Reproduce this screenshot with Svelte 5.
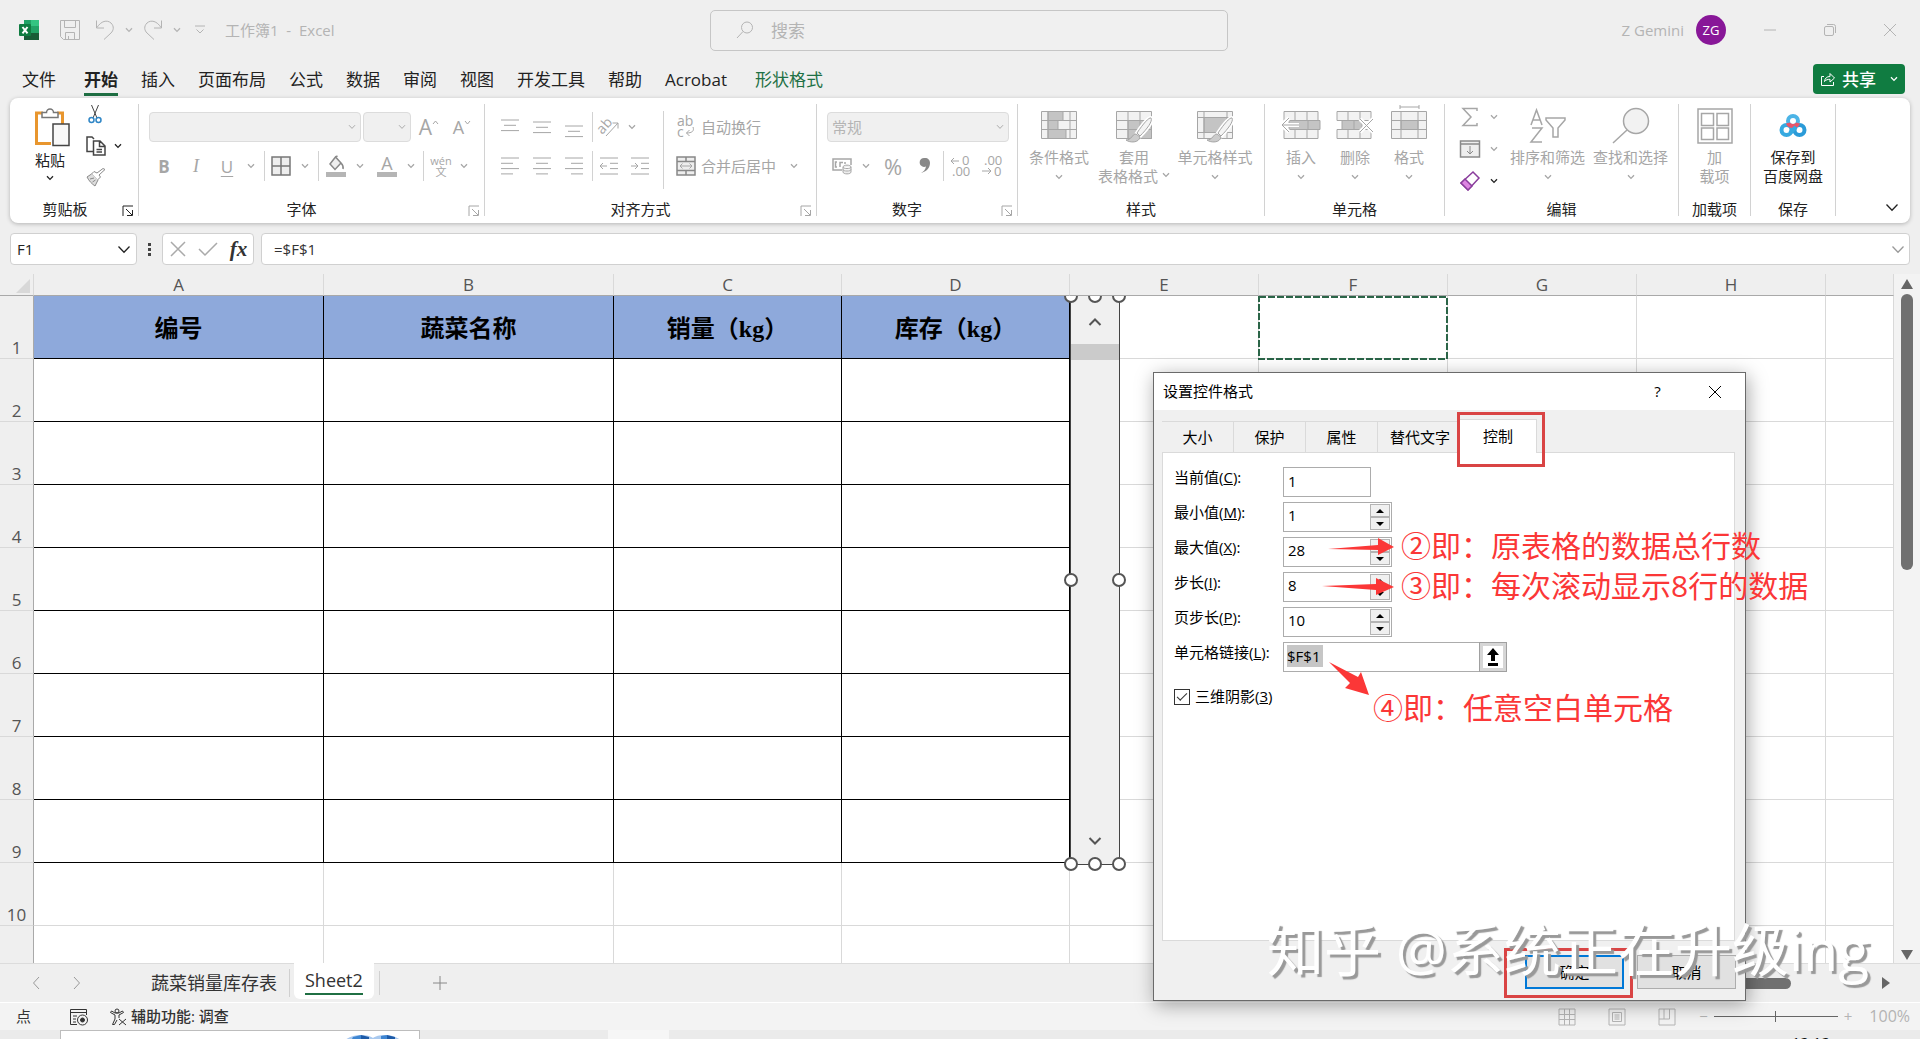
<script lang="ts">
	const tabs = ['文件', '开始', '插入', '页面布局', '公式', '数据', '审阅', '视图', '开发工具', '帮助', 'Acrobat', '形状格式'];
	const columns = ['A', 'B', 'C', 'D', 'E', 'F', 'G', 'H', ''];
	const headings = ['编号', '蔬菜名称', '销量（kg）', '库存（kg）'];
	const rows = [1, 2, 3, 4, 5, 6, 7, 8, 9, 10, 11];
	const handles = ['tl', 'tc', 'tr', 'ml', 'mr', 'bl', 'bc', 'br'];

	const dialogTabs = ['大小', '保护', '属性', '替代文字', '控制'];
	let activeDialogTab = $state('控制');

	const spinFields = [
		{ id: 'min', label: '最小值', key: 'M', value: '1' },
		{ id: 'max', label: '最大值', key: 'X', value: '28' },
		{ id: 'step', label: '步长', key: 'I', value: '8' },
		{ id: 'page', label: '页步长', key: 'P', value: '10' }
	];

	let sheet = $state('Sheet2');
	let shadow = $state(true);
</script>

{#snippet chevron()}
	<svg class="chev" width="8" height="6" viewBox="0 0 8 6"><path d="M1 1.2 4 4.4 7 1.2" /></svg>
{/snippet}

{#snippet bigChevron()}
	<svg class="chev" width="14" height="9" viewBox="0 0 14 9"><path d="M1.5 1.5 7 7.2l5.500-5.700" /></svg>
{/snippet}

{#snippet lines(ws: number[], align: string)}
	<svg width="20" height="20" viewBox="0 0 20 20">
		{#each ws as w, i}
			<path d="M{align === 'l' ? 1 : align === 'r' ? 19 - w : 10 - w / 2} {2 + i * 5.3}h{w}" />
		{/each}
	</svg>
{/snippet}

{#snippet launcher(dark: boolean)}
	<button class="launcher" class:dark aria-label="更多选项">
		<svg width="12" height="12" viewBox="0 0 12 12"><path d="M1 11V1h10M4 4l6 6M10.500 5v5.500H5" /></svg>
	</button>
{/snippet}

{#snippet brush()}
	<path d="M36 10c-2-1-8 6-14 15l3 3c7-7 13-15 11-18z" fill="#f4f4f4" stroke="#fff" stroke-width="4" />
	<path d="M36 10c-2-1-8 6-14 15l3 3c7-7 13-15 11-18z" fill="#f4f4f4" />
	<path d="M21 26c-4 0-4 6-10 6 4 3 13 3 14-3z" fill="#ccc" />
{/snippet}

<div class="app">
	<header class="titlebar">
		<div class="quick">
			<svg class="logo" width="22" height="22" viewBox="0 0 22 22">
				<path d="M6 1h7v6H6z" fill="#21a366" /><path d="M13 1h8v6h-8z" fill="#33c481" />
				<path d="M6 7h7v7H6z" fill="#107c41" /><path d="M13 7h8v7h-8z" fill="#21a366" />
				<path d="M6 14h15v7H6z" fill="#185c37" />
				<rect x="1" y="5" width="12" height="12" rx="1" fill="#107c41" />
				<path d="M4.500 8 9.500 14.300M9.500 8 4.500 14.300" stroke="#fff" stroke-width="1.800" />
			</svg>
			<button class="q-save" aria-label="保存">
				<svg width="22" height="22" viewBox="0 0 22 22"><path d="M1.500 1.500h19v19h-16l-3-3zM5.500 1.500v7h11v-7M6.500 20.500v-7h9v7M9.500 17v3" /></svg>
			</button>
			<button aria-label="撤消">
				<svg width="20" height="22" viewBox="0 0 20 22"><path d="M1.500 1.500V9H9M2 8.500C6 2 12 .5 16 4c3.500 3.500 2.500 7.500 0 10L9 20.500" /></svg>
			</button>
			<button class="q-chev" aria-label="撤消列表">{@render chevron()}</button>
			<button aria-label="恢复">
				<svg width="20" height="22" viewBox="0 0 20 22"><path d="M18.500 1.500V9H11M18 8.500C14 2 8 .5 4 4c-3.500 3.500-2.500 7.500 0 10l7 6.500" /></svg>
			</button>
			<button class="q-chev" aria-label="恢复列表">{@render chevron()}</button>
			<button class="q-more" aria-label="自定义快速访问工具栏">
				<svg width="10" height="10" viewBox="0 0 10 10"><path d="M0 1h10M1.500 4.500 5 8l3.500-3.500" /></svg>
			</button>
			<span class="doc">工作簿1&nbsp; -&nbsp; Excel</span>
		</div>
		<label class="search">
			<svg width="20" height="20" viewBox="0 0 20 20"><circle cx="12" cy="7.500" r="5.500" /><path d="M8 11.500 2 18" /></svg>
			<input type="text" placeholder="搜索" aria-label="搜索" />
		</label>
		<div class="account">
			<span>Z Gemini</span>
			<span class="avatar">ZG</span>
			<button aria-label="最小化"><svg width="14" height="14" viewBox="0 0 14 14"><path d="M1 7h12" /></svg></button>
			<button aria-label="向下还原"><svg width="14" height="14" viewBox="0 0 14 14"><rect x="1.500" y="3.500" width="9" height="9" rx="1.500" /><path d="M4 1.500h6.500q2 0 2 2V10" /></svg></button>
			<button aria-label="关闭"><svg width="14" height="14" viewBox="0 0 14 14"><path d="M1 1l12 12M13 1 1 13" /></svg></button>
		</div>
	</header>

	<nav class="tabs">
		{#each tabs as tab}
			<button class:active={tab === '开始'} class:context={tab === '形状格式'}>{tab}</button>
		{/each}
		<button class="share">
			<svg width="16" height="16" viewBox="0 0 16 16"><path d="M4 5.500H1.500v9h12V11M4.500 10.500C5 7 7 5.500 10 5.500V2.500l4.500 4.500L10 11V8.300c-2.500 0-4 .5-5.500 2.200z" /></svg>
			<span>共享</span>
			{@render chevron()}
		</button>
	</nav>

	<section class="ribbon">
		<div class="group clipboard">
			<div class="body">
				<button class="paste dark">
					<svg width="36" height="40" viewBox="0 0 36 40">
						<path d="M9 6H2.500v30.500H17M23 6h5.500v11" stroke="#e8962e" stroke-width="3" />
						<path d="M8 10.500V5.500h4.500a3.500 3.500 0 0 1 7 0H24v5z" fill="#fff" stroke="#777" stroke-width="1.500" />
						<rect x="19" y="17" width="16" height="21.500" fill="#f8f8f8" stroke="#444" stroke-width="1.500" />
					</svg>
					<span>粘贴</span>
					{@render chevron()}
				</button>
				<div class="clip-side">
					<button class="cut" aria-label="剪切">
						<svg width="14" height="20" viewBox="0 0 14 20"><path d="M3.500 1 9 14M10.500 1 5 14" stroke="#444" /><circle cx="3.500" cy="16" r="2.500" stroke="#2f86c6" stroke-width="1.500" /><circle cx="10.500" cy="16" r="2.500" stroke="#2f86c6" stroke-width="1.500" /></svg>
					</button>
					<button class="dark copy" aria-label="复制">
						<svg width="20" height="20" viewBox="0 0 20 20"><path d="M7 15.500H1V1h5l2 2" stroke="#444" stroke-width="1.500" /><path d="M7.500 5h6.500l5 5v9H7.500zM13.500 5v5.500H19M10.500 13.500h5.500M10.500 16h5.500" stroke="#444" stroke-width="1.500" /></svg>
						{@render chevron()}
					</button>
					<button aria-label="格式刷">
						<svg width="20" height="19" viewBox="0 0 20 19"><path d="M19 1.500 13 7l1.500 2-3 3-6-6 2.500-2.500L11 5l6-4.500z" stroke="#8a8a8a" /><path d="M5.500 6 1 9c2 4 5 7 8 9l3-6M4 11l4-1M6.500 14l3-2" fill="#ddd" stroke="#8a8a8a" /></svg>
					</button>
				</div>
			</div>
			<footer>剪贴板{@render launcher(true)}</footer>
		</div>

		<div class="group font">
			<div class="body stack">
				<div class="row">
					<select class="combo wide" aria-label="字体" disabled></select>
					<select class="combo narrow" aria-label="字号" disabled></select>
					<button class="grow" aria-label="增大字号">A<svg width="7" height="14" viewBox="0 0 7 14"><path d="M1 4l2.500-3L6 4" /></svg></button>
					<button class="shrink" aria-label="减小字号">A<svg width="7" height="14" viewBox="0 0 7 14"><path d="M1 1l2.500 3L6 1" /></svg></button>
				</div>
				<div class="row font-tools">
					<button class="b">B</button>
					<button class="i">I</button>
					<button class="u">U</button>
					{@render chevron()}
					<span class="bar"></span>
					<button aria-label="边框"><svg width="20" height="20" viewBox="0 0 20 20"><path d="M1 1h18v18H1zM10 1v18M1 10h18" stroke="#777" stroke-width="1.500" fill="#eee" /></svg></button>
					{@render chevron()}
					<span class="bar"></span>
					<button aria-label="填充颜色"><svg width="20" height="22" viewBox="0 0 20 22"><path d="M9.500 2 4 9l5 5.500L15 8zM9.500 2l2-1M15 8c2 2 2.500 4 2 6" fill="#eee" stroke="#888" stroke-width="1.500" /><path d="M0 17h20v5H0z" fill="#b5b5b5" stroke="none" /></svg></button>
					{@render chevron()}
					<button class="font-color" aria-label="字体颜色">A</button>
					{@render chevron()}
					<span class="bar"></span>
					<button class="wen"><span>wén</span><span>文</span></button>
					{@render chevron()}
				</div>
			</div>
			<footer>字体{@render launcher(false)}</footer>
		</div>

		<div class="group align">
			<div class="body">
				<div class="align-grid">
					<button class="up" aria-label="顶端对齐">{@render lines([18, 12, 18], 'c')}</button>
					<button class="mid" aria-label="垂直居中">{@render lines([18, 12, 18], 'c')}</button>
					<button class="low" aria-label="底端对齐">{@render lines([18, 12, 18], 'c')}</button>
					<span class="bar"></span>
					<button aria-label="方向"><svg width="22" height="22" viewBox="0 0 22 22"><text x="-1" y="15" transform="rotate(-48 6 11)" font-size="14">ab</text><path d="M8 20 20 7M14.500 7H20v5.500" /></svg></button>
					{@render chevron()}
					<button aria-label="左对齐">{@render lines([18, 12, 18, 12], 'l')}</button>
					<button aria-label="居中">{@render lines([18, 12, 18, 12], 'c')}</button>
					<button aria-label="右对齐">{@render lines([18, 12, 18, 12], 'r')}</button>
					<span class="bar"></span>
					<button aria-label="减少缩进"><svg width="20" height="20" viewBox="0 0 20 20"><path d="M1 2h18M11 7.300h8M11 12.600h8M1 18h18M1 10h7M4 7l-3 3 3 3" /></svg></button>
					<button aria-label="增加缩进"><svg width="20" height="20" viewBox="0 0 20 20"><path d="M1 2h18M11 7.300h8M11 12.600h8M1 18h18M1 10h7M5 7l3 3-3 3" /></svg></button>
				</div>
				<span class="bar tall"></span>
				<div class="wraps">
					<button>
						<svg width="20" height="22" viewBox="0 0 20 22"><text x="1" y="10" font-size="14">ab</text><text x="1" y="21" font-size="14">c</text><path d="M17 11c1.500 4-1 6-6.500 6M13.500 14l-3 3 3 3" /></svg>
						<span>自动换行</span>
					</button>
					<button>
						<svg width="20" height="20" viewBox="0 0 20 20"><path d="M1 1h18v18H1zM1 5.500h18M1 14.500h18M10 1v4.500M10 14.500V19" fill="#eee" stroke="#888" stroke-width="1.500" /><path d="M4 10h12M6.500 7.500 4 10l2.500 2.500M13.500 7.500 16 10l-2.500 2.500" /></svg>
						<span>合并后居中</span>
						{@render chevron()}
					</button>
				</div>
			</div>
			<footer>对齐方式{@render launcher(false)}</footer>
		</div>

		<div class="group number">
			<div class="body stack">
				<div class="row">
					<select class="combo fmt" aria-label="数字格式" disabled><option>常规</option></select>
				</div>
				<div class="row number-tools">
					<button aria-label="会计数字格式"><svg width="20" height="18" viewBox="0 0 20 18"><path d="M10 13H1V2h18v6M5 5H3.500v5H5M8 10V5.500h3M13 5v2" stroke-width="1.500" /><path d="M11 10c0-2.500 8-2.500 8 0v5c0 2.500-8 2.500-8 0zM11 10c0 2 8 2 8 0M11 12.500c0 2 8 2 8 0" fill="#eee" /></svg></button>
					{@render chevron()}
					<button class="pct">%</button>
					<button aria-label="千位分隔"><svg width="12" height="18" viewBox="0 0 12 18"><path d="M6 1a4.500 4.500 0 1 0 1 8.500C6.500 13 4 15 2 16c4-1 9-4 9-10C11 3 9 1 6 1z" fill="#888" stroke="none" /></svg></button>
					<span class="bar"></span>
					<button aria-label="增加小数位数"><svg width="20" height="22" viewBox="0 0 20 22"><text x="12" y="10" font-size="13">0</text><text x="2" y="21" font-size="13">.00</text><path d="M1 6h8M4 3 1 6l3 3" /></svg></button>
					<button aria-label="减少小数位数"><svg width="20" height="22" viewBox="0 0 20 22"><text x="2" y="10" font-size="13">.00</text><text x="12" y="21" font-size="13">0</text><path d="M0 16h9M6 13l3 3-3 3" /></svg></button>
				</div>
			</div>
			<footer>数字{@render launcher(false)}</footer>
		</div>

		<div class="group styles">
			<div class="body">
				<button class="big">
					<svg width="38" height="36" viewBox="0 0 38 36"><path d="M1.500 3.500h35v27h-35z" fill="#f2f2f2" /><path d="M8 3.500h15v9H8zM8 12.500h10v9H8zM8 21.500h18v9H8z" fill="#c4c4c4" /><path d="M1.500 12.500h35M1.500 21.500h35M8 3.500v27M30 3.500v27" /></svg>
					<span>条件格式</span>
					{@render chevron()}
				</button>
				<button class="big">
					<svg width="38" height="36" viewBox="0 0 38 36"><path d="M1.500 3.500h35v27h-35z" fill="#f2f2f2" /><path d="M13 12.500h23.500v18H13z" fill="#c4c4c4" /><path d="M1.500 12.500h35M1.500 21.500h35M13 3.500v27M25 3.500v27" />{@render brush()}</svg>
					<span>套用</span>
					<span class="inline">表格格式 {@render chevron()}</span>
				</button>
				<button class="big">
					<svg width="38" height="36" viewBox="0 0 38 36"><path d="M1.500 3.500h35v27h-35z" fill="#f2f2f2" /><path d="M8 9.500h23v15H8z" fill="#c4c4c4" /><path d="M1.500 9.500h35M1.500 24.500h35M8 3.500v27M31 3.500v27" />{@render brush()}</svg>
					<span>单元格样式</span>
					{@render chevron()}
				</button>
			</div>
			<footer>样式</footer>
		</div>

		<div class="group cells">
			<div class="body">
				<button class="big">
					<svg width="40" height="36" viewBox="0 0 40 36"><path d="M3 3.500h34v9H3zM3 21.500h34v9H3zM14 3.500v9M26 3.500v9M14 21.500v9M26 21.500v9" fill="#f2f2f2" /><path d="M8 12.500h31v9H8zM27 12.500v9" fill="#c4c4c4" /><path d="M1 17h17M8 10l-7 7 7 7" stroke="#fff" stroke-width="4" /><path d="M1 17h17M8 10l-7 7 7 7" /></svg>
					<span>插入</span>
					{@render chevron()}
				</button>
				<button class="big">
					<svg width="40" height="36" viewBox="0 0 40 36"><path d="M2 3.500h34v9H2zM2 21.500h34v9H2zM13 3.500v9M25 3.500v9M13 21.500v9M25 21.500v9" fill="#f2f2f2" /><path d="M7 12.500h20v9H7zM19 12.500v9" fill="#c4c4c4" /><path d="M25 11l13 13M38 11 25 24" stroke="#fff" stroke-width="4" /><path d="M25 11l13 13M38 11 25 24" /></svg>
					<span>删除</span>
					{@render chevron()}
				</button>
				<button class="big">
					<svg width="38" height="36" viewBox="0 0 38 36"><path d="M1.500 3.500h35v27h-35z" fill="#f2f2f2" /><path d="M11 12.500h17v9H11z" fill="#c4c4c4" /><path d="M1.500 12.500h35M1.500 21.500h35M11 3.500v27M28 3.500v27M10-1h19M10-3v4M29-3v4" /></svg>
					<span>格式</span>
					{@render chevron()}
				</button>
			</div>
			<footer>单元格</footer>
		</div>

		<div class="group editing">
			<div class="body">
				<div class="edit-side">
					<button aria-label="自动求和"><svg width="20" height="20" viewBox="0 0 20 20"><path d="M17 4V1.500H3l8 8.500-8 8.500h14V16" stroke-width="1.500" /></svg></button>
					{@render chevron()}
					<button aria-label="填充"><svg width="20" height="20" viewBox="0 0 20 20"><path d="M.5 2h19v16H.5zM.5 5h19" fill="#eee" stroke="#8a8a8a" stroke-width="1.500" /><path d="M10 7v8M7 12l3 3 3-3" stroke="#8a8a8a" /></svg></button>
					{@render chevron()}
					<button aria-label="清除"><svg width="20" height="20" viewBox="0 0 20 20"><path d="M1 12 13 1l6 6L8 19z" fill="#fff" stroke="#8a3d9c" stroke-width="1.500" /><path d="M1 12l4-4 7 7-4 4z" fill="#dd85e2" stroke="#8a3d9c" stroke-width="1.500" /></svg></button>
					<span class="dark">{@render chevron()}</span>
				</div>
				<button class="big">
					<svg width="38" height="36" viewBox="0 0 38 36"><path d="M2 17 7.500 2 13 17M4 12h7M3 20h10L2 34h11M17 10h19v2l-7 8v9h-5v-9l-7-8z" fill="none" stroke-width="1.500" /></svg>
					<span>排序和筛选</span>
					{@render chevron()}
				</button>
				<button class="big">
					<svg width="38" height="36" viewBox="0 0 38 36"><circle cx="24" cy="13" r="12.500" fill="#f2f2f2" stroke-width="1.500" /><path d="M15 22 1 35" stroke-width="1.500" /></svg>
					<span>查找和选择</span>
					{@render chevron()}
				</button>
			</div>
			<footer>编辑</footer>
		</div>

		<div class="group addins">
			<div class="body">
				<button class="big">
					<svg width="36" height="36" viewBox="0 0 36 36"><path d="M1 1h34v34H1zM4.500 5.500h12v12h-12zM20 5.500h11.500v12H20zM4.500 20h12v11.500h-12zM20 20h11.500v11.500H20z" fill="none" stroke-width="1.500" /></svg>
					<span>加</span>
					<span>载项</span>
				</button>
			</div>
			<footer>加载项</footer>
		</div>

		<div class="group save">
			<div class="body">
				<button class="big dark">
					<svg width="36" height="36" viewBox="0 0 36 36"><g fill="none" stroke-width="4"><circle cx="11.500" cy="22" r="5" stroke="#36a9e0" /><circle cx="24.500" cy="22" r="5" stroke="#2b9bd8" /><circle cx="18" cy="13" r="5" stroke="#4cb4e6" /><path d="M13 15c1 4 9 4 10 0" stroke="#e8556a" /><path d="M15 25l6-6" stroke="#36a9e0" /></g></svg>
					<span>保存到</span>
					<span>百度网盘</span>
				</button>
			</div>
			<footer>保存</footer>
		</div>
		<button class="collapse" aria-label="折叠功能区">{@render bigChevron()}</button>
	</section>

	<section class="formula">
		<label class="namebox">
			<input type="text" value="F1" aria-label="名称框" />
			{@render bigChevron()}
		</label>
		<span class="dots"></span>
		<div class="fx">
			<button aria-label="取消"><svg width="18" height="16" viewBox="0 0 18 16"><path d="M2 1l14 14M16 1 2 15" stroke="#aaa" stroke-width="1.500" /></svg></button>
			<button aria-label="输入"><svg width="20" height="16" viewBox="0 0 20 16"><path d="M1 8l6 6L19 2" stroke="#aaa" stroke-width="1.500" /></svg></button>
			<button class="fn">fx</button>
		</div>
		<label class="expr">
			<input type="text" value="=$F$1" aria-label="编辑栏" />
			{@render bigChevron()}
		</label>
	</section>

	<main class="sheet">
		<div class="grid-wrap">
			<table>
				<colgroup>
					<col class="c-num" /><col class="c-ab" /><col class="c-ab" /><col class="c-cd" /><col class="c-cd" />
					<col class="c-ef" /><col class="c-ef" /><col class="c-ef" /><col class="c-ef" /><col />
				</colgroup>
				<thead>
					<tr>
						<th class="corner"><svg width="14" height="14" viewBox="0 0 14 14"><path d="M14 0v14H0z" /></svg></th>
						{#each columns as column}
							<th>{column}</th>
						{/each}
					</tr>
				</thead>
				<tbody>
					{#each rows as row}
						<tr>
							<th>{row}</th>
							{#each columns as _, i}
								<td class:boxed={i < 4 && row < 10} class:heading={i < 4 && row === 1}>{row === 1 && i < 4 ? headings[i] : ''}</td>
							{/each}
						</tr>
					{/each}
				</tbody>
			</table>
			<div class="canvas">
				<div class="control">
					<svg width="14" height="10" viewBox="0 0 14 10"><path d="M1.500 8 7 2.500 12.500 8" /></svg>
					<span class="thumb"></span>
					<svg class="down" width="14" height="10" viewBox="0 0 14 10"><path d="M1.500 2 7 7.500 12.500 2" /></svg>
					{#each handles as handle}
						<i class="handle {handle}"></i>
					{/each}
				</div>
				<svg class="ants" width="190" height="64" viewBox="0 0 190 64"><path d="M1 1h188v62H1z" /></svg>
			</div>
		</div>
		<div class="vbar">
			<svg width="12" height="10" viewBox="0 0 12 10"><path d="M6 0l6 10H0z" /></svg>
			<span></span>
			<svg class="end" width="12" height="10" viewBox="0 0 12 10"><path d="M0 0h12L6 10z" /></svg>
		</div>
	</main>

	<div class="sheetbar">
		<button class="nav" aria-label="上一个工作表"><svg width="8" height="14" viewBox="0 0 8 14"><path d="M7 1 1.500 7 7 13" /></svg></button>
		<button class="nav" aria-label="下一个工作表"><svg width="8" height="14" viewBox="0 0 8 14"><path d="M1 1l5.500 6L1 13" /></svg></button>
		{#each ['蔬菜销量库存表', 'Sheet2'] as name}
			<button class="sheet-tab" class:active={sheet === name} onclick={() => (sheet = name)}><span>{name}</span></button>
		{/each}
		<button class="add" aria-label="新工作表"><svg width="16" height="16" viewBox="0 0 16 16"><path d="M8 1v14M1 8h14" /></svg></button>
		<div class="hbar">
			<span></span>
			<svg width="8" height="12" viewBox="0 0 8 12"><path d="M0 0l8 6-8 6z" /></svg>
		</div>
	</div>

	<footer class="status">
		<span class="mode">点</span>
		<svg class="macro" width="20" height="18" viewBox="0 0 20 18"><path d="M8 16.500H1.500v-15h16V7M1.500 4.500h16M4 8h4M4 11h3M4 14h3" /><circle cx="13.500" cy="12" r="5" /><circle cx="13.500" cy="12" r="2" fill="#333" /></svg>
		<button class="access">
			<svg width="18" height="18" viewBox="0 0 18 18"><circle cx="8" cy="3" r="2" /><path d="M1.500 4.500 6 7v4l-2.500 5.500h2L8 12M14.500 4.500 10 7v3M1.500 4.500l1-1.500L6 5h4l3.500-2 1 1.500M10 11l7 6M17 11l-7 6" /></svg>
			<span>辅助功能: 调查</span>
		</button>
		<div class="views">
			<button aria-label="普通"><svg width="18" height="18" viewBox="0 0 18 18"><path d="M1 1h16v16H1zM6.500 1v16M11.500 1v16M1 6.500h16M1 11.500h16" /></svg></button>
			<button aria-label="页面布局"><svg width="18" height="18" viewBox="0 0 18 18"><path d="M1 1h16v16H1zM4.500 4.500h9v9h-9zM6.500 7h5M6.500 9h5M6.500 11h5" /></svg></button>
			<button aria-label="分页预览"><svg width="18" height="18" viewBox="0 0 18 18"><path d="M1 1h16v16H1zM6 1v10M11.500 1v10M1 11h10.500" /></svg></button>
		</div>
		<div class="zoom">
			<span>−</span>
			<span class="track"></span>
			<span>+</span>
			<span class="value">100%</span>
		</div>
	</footer>

	<div class="taskbar">
		<div class="preview">
			<svg width="56" height="6" viewBox="0 0 56 6"><path d="M0 5C4 2 10 0 16 0s9 1 12 3c3-2 6-3 12-3s11 2 16 5v1H0z" fill="#a9c9ef" /><path d="M8 2l8-2v6H6zM36 1l6-1v6h-6z" fill="#3f86d2" /><path d="M16 0l8 2v4h-8zM42 0l8 2v4h-8z" fill="#1d5ba8" /></svg>
		</div>
		<div class="pin"></div>
		<span class="clock">12:12</span>
	</div>

	<div class="dialog" role="dialog" aria-label="设置控件格式">
		<header>
			<span>设置控件格式</span>
			<button>?</button>
			<button aria-label="关闭对话框"><svg width="14" height="14" viewBox="0 0 14 14"><path d="M1 1l12 12M13 1 1 13" /></svg></button>
		</header>
		<div class="dialog-tabs">
			{#each dialogTabs as tab}
				<button class:active={tab === activeDialogTab} class:long={tab.length > 2} onclick={() => (activeDialogTab = tab)}>{tab}</button>
			{/each}
		</div>
		<div class="panel">
			<div class="field">
				<label for="cur">当前值(<u>C</u>):</label>
				<input id="cur" class="short" type="text" value="1" />
			</div>
			{#each spinFields as field}
				<div class="field">
					<label for={field.id}>{field.label}(<u>{field.key}</u>):</label>
					<div class="spin">
						<input id={field.id} type="text" value={field.value} />
						<div class="arrows">
							<button aria-label="增加"><svg width="8" height="4" viewBox="0 0 8 4"><path d="M4 0l4 4H0z" /></svg></button>
							<button aria-label="减少"><svg width="8" height="4" viewBox="0 0 8 4"><path d="M0 0h8L4 4z" /></svg></button>
						</div>
					</div>
				</div>
			{/each}
			<div class="field">
				<label for="link">单元格链接(<u>L</u>):</label>
				<div class="ref">
					<div class="ref-box">
						<input id="link" type="text" value="$F$1" />
					</div>
					<button aria-label="选择单元格"><svg width="12" height="18" viewBox="0 0 12 18"><path d="M6 0l6 7H8v6H4V7H0zM1 15h10v3H1z" /></svg></button>
				</div>
			</div>
			<label class="check"><input type="checkbox" bind:checked={shadow} /><span>三维阴影(<u>3</u>)</span></label>
		</div>
		<div class="actions">
			<button class="ok">确定</button>
			<button>取消</button>
		</div>
	</div>

	<!-- red markup on top of the dialog -->
	<div class="notes">
		<i class="box tab-box"></i>
		<i class="box ok-box"></i>
		<svg class="arrow a1" width="66" height="18" viewBox="0 0 66 18"><path d="M0 11 50 7V0l16 9-16 8v-5z" /></svg>
		<svg class="arrow a2" width="72" height="18" viewBox="0 0 72 18"><path d="M0 8l54-2V0l18 9-18 8v-5z" /></svg>
		<svg class="arrow a3" width="42" height="34" viewBox="0 0 42 34"><path d="M0 0l29 15 3-5 8 23-24-7 5-5z" /></svg>
		<p class="n2">②即：原表格的数据总行数</p>
		<p class="n3">③即：每次滚动显示8行的数据</p>
		<p class="n4">④即：任意空白单元格</p>
		<p class="mark">知乎 @系统正在升级ing</p>
	</div>
</div>

<style>
	:global(body) {
		margin: 0;
		overflow: hidden;
	}

	.app {
		position: relative;
		display: flex;
		flex-direction: column;
		height: 100vh;
		overflow: hidden;
		background: #efefef;
		color: #222;
		font: 15px/19px "Open Sans", "Noto Sans CJK SC", sans-serif;
	}

	button,
	input,
	select {
		font: inherit;
		color: inherit;
		margin: 0;
		padding: 0;
		border: 0;
		background: none;
		box-sizing: border-box;
		outline: 0;
	}

	button {
		display: flex;
		align-items: center;
		justify-content: center;
		white-space: nowrap;
	}

	svg {
		display: block;
		flex: none;
		overflow: visible;
		fill: none;
		stroke: currentColor;
	}

	svg text {
		fill: currentColor;
		stroke: none;
	}

	.logo path,
	.logo rect {
		stroke-width: 0;
	}

	.logo path:last-child {
		stroke-width: 2;
	}

	.chev {
		justify-self: center;
		align-self: center;
		stroke-width: 1.3;
	}

	/* title bar */
	.titlebar {
		display: grid;
		grid-template-columns: 1fr 518px 1fr;
		align-items: center;
		height: 60px;
		padding: 0 0 0 18px;
		gap: 10px;
		color: #b4b4b4;
		flex: none;
	}

	.quick,
	.account {
		display: flex;
		align-items: center;
	}

	.q-save {
		margin: 0 14px 0 19px;
	}

	.q-chev {
		width: 28px;
	}

	.q-more {
		margin: 0 20px 0 4px;
	}

	.doc {
		white-space: nowrap;
	}

	.search {
		display: flex;
		align-items: center;
		gap: 16px;
		height: 41px;
		padding: 0 24px;
		border: 1px solid #c6c6c6;
		border-radius: 5px;
		box-sizing: border-box;
		font-size: 17px;
		background: #f0f0f0;
	}

	.search input {
		flex: 1;
	}

	.search input::placeholder {
		color: #b4b4b4;
		opacity: 1;
	}

	.account {
		justify-content: flex-end;
		padding-right: 16px;
	}

	.avatar {
		display: grid;
		place-items: center;
		width: 30px;
		height: 30px;
		margin: 0 14px 0 12px;
		border-radius: 50%;
		background: #881798;
		color: #fff;
		font-size: 13px;
	}

	.account button {
		width: 60px;
	}

	.account button:last-child {
		width: 28px;
		margin-left: 16px;
	}

	/* ribbon tabs */
	.tabs {
		display: flex;
		gap: 23px;
		height: 38px;
		padding: 0 15px 0 22px;
		font-size: 17px;
		flex: none;
	}

	.tabs button {
		height: 36px;
		padding-top: 5px;
		border-bottom: 3px solid transparent;
	}

	.tabs button:first-child {
		margin-right: 5px;
	}

	.tabs .active {
		font-weight: 700;
		border-color: #1f6f43;
	}

	.tabs .context {
		margin-left: 5px;
		color: #1e7145;
	}

	.tabs .share {
		margin: 4px 0 4px auto;
		height: 30px;
		width: 92px;
		padding: 0;
		border: 0;
		border-radius: 4px;
		gap: 6px;
		background: #107c41;
		color: #fff;
		font-weight: 500;
	}

	.share .chev {
		margin-left: 8px;
	}

	/* ribbon */
	.ribbon {
		display: flex;
		margin: 0 10px;
		padding: 6px 0 7px;
		border-radius: 8px;
		background: #fff;
		box-shadow: 0 1px 4px rgba(0, 0, 0, 0.25);
		flex: none;
	}

	.group {
		display: flex;
		flex-direction: column;
		height: 112px;
		border-right: 1px solid #d2d2d2;
		box-sizing: border-box;
		color: #a6a6a6;
		flex: none;
	}

	.clipboard { width: 129px; }
	.font { width: 346px; }
	.align { width: 332px; }
	.number { width: 201px; }
	.styles { width: 247px; }
	.cells { width: 180px; }
	.editing { width: 234px; }
	.addins { width: 72px; }
	.save { width: 85px; }

	.body {
		display: flex;
		flex: 1;
	}

	.stack {
		flex-direction: column;
		padding-top: 8px;
		gap: 9px;
	}

	.group footer {
		position: relative;
		height: 16px;
		line-height: 18px;
		text-align: center;
		color: #222;
	}

	.clipboard footer {
		padding-right: 18px;
	}

	.font footer,
	.align footer,
	.number footer {
		padding-right: 20px;
	}

	.launcher {
		position: absolute;
		right: 4px;
		top: 5px;
		color: #a6a6a6;
	}

	.dark {
		color: #222;
	}

	.launcher.dark {
		color: #222;
	}

	.paste {
		flex-direction: column;
		justify-content: flex-start;
		padding-top: 3px;
		width: 68px;
		margin-left: 8px;
	}

	.paste span {
		margin: 4px 4px 5px 0;
	}

	.paste .chev {
		margin-right: 4px;
	}

	.clip-side {
		display: flex;
		flex-direction: column;
		align-items: flex-start;
		gap: 12px;
		padding: 3px 0 0 -2px;
	}

	.cut {
		width: 18px;
	}

	.copy {
		gap: 8px;
	}

	.row {
		display: flex;
		align-items: center;
		height: 30px;
		padding-left: 10px;
	}

	.combo {
		height: 30px;
		border: 1px solid #dcdcdc;
		border-radius: 4px;
		opacity: 1;
		color: #b4b4b4;
		appearance: none;
		background: #f0f0f0 url("data:image/svg+xml,%3Csvg xmlns='http://www.w3.org/2000/svg' width='8' height='6'%3E%3Cpath d='M1 1.200 4 4.400 7 1.200' fill='none' stroke='%23aaa'/%3E%3C/svg%3E") no-repeat right 4px center;
	}

	.wide { width: 212px; margin-right: 2px; }
	.narrow { width: 48px; }
	.fmt { width: 182px; padding-left: 4px; }

	.grow {
		width: 36px;
		font-size: 21px;
	}

	.shrink {
		width: 30px;
		font-size: 18px;
	}

	.font-tools {
		display: grid;
		grid-template-columns: 32px 32px 30px 18px 8px 26px 22px 4px 32px 16px 38px 10px 14px 22px 24px;
		padding-left: 9px;
	}

	.bar {
		justify-self: center;
		width: 1px;
		height: 30px;
		background: #d2d2d2;
	}

	.b { font-weight: 700; font-size: 17px; }
	.i { font: italic 18px "Liberation Serif", serif; }
	.u { font-size: 17px; text-decoration: underline; text-underline-offset: 3px; }

	.font-color {
		justify-self: center;
		width: 20px;
		height: 22px;
		padding-bottom: 2px;
		font-size: 18px;
		line-height: 16px;
		border-bottom: 5px solid #b5b5b5;
	}

	.wen {
		flex-direction: column;
		font-size: 11px;
		line-height: 11px;
	}

	.align-grid {
		display: grid;
		grid-template-columns: 32px 32px 32px 4px 30px 32px;
		grid-template-rows: 30px 30px;
		row-gap: 9px;
		align-content: start;
		align-items: center;
		padding: 8px 0 0 9px;
	}

	.align-grid .chev {
		justify-self: start;
		margin-left: 4px;
	}

	.up { padding-top: 1px; }
	.mid { padding-top: 6px; }
	.low { padding-top: 14px; }

	.bar.tall {
		height: 78px;
		margin: 7px 12px 0 7px;
	}

	.wraps {
		display: flex;
		flex-direction: column;
		gap: 9px;
		padding-top: 8px;
	}

	.wraps button {
		justify-content: flex-start;
		gap: 5px;
		height: 30px;
	}

	.wraps .chev {
		margin-left: 9px;
	}

	.number-tools {
		display: grid;
		grid-template-columns: 34px 14px 40px 24px 12px 22px 42px;
		padding-left: 8px;
	}

	.pct {
		font-size: 22px;
	}

	.big {
		flex-direction: column;
		justify-content: flex-start;
		padding-top: 4px;
	}

	.big svg:first-child {
		margin-bottom: 4px;
	}

	.big > .chev {
		margin-top: 7px;
	}

	.inline {
		display: flex;
		gap: 4px;
	}

	.styles .body {
		display: grid;
		grid-template-columns: 82px 68px 94px;
	}

	.cells .body {
		display: grid;
		grid-template-columns: 54px 54px 54px;
		padding-left: 9px;
	}

	.edit-side {
		display: grid;
		grid-template-columns: 36px 12px;
		grid-template-rows: 32px 32px 32px;
		padding: 0 6px 0 7px;
		margin-top: -3px;
	}

	.edit-side .dark {
		display: grid;
	}

	.editing .big {
		width: 83px;
	}

	.addins .big,
	.save .big {
		width: 100%;
	}

	.collapse {
		align-self: flex-end;
		margin: 0 11px 4px auto;
	}

	/* formula bar */
	.formula {
		display: flex;
		align-items: center;
		gap: 7px;
		margin: 10px 10px 9px;
		height: 32px;
		font-size: 15px;
		flex: none;
	}

	.namebox,
	.fx,
	.expr {
		display: flex;
		align-items: center;
		height: 32px;
		border: 1px solid #d0d0d0;
		border-radius: 4px;
		background: #fff;
		box-sizing: border-box;
	}

	.namebox {
		width: 127px;
		padding: 0 5px 0 6px;
	}

	.namebox input {
		width: 100px;
	}

	.dots {
		width: 3px;
		height: 13px;
		margin: 0 4px 0 4px;
		background: repeating-linear-gradient(#444 0 3px, transparent 3px 5px);
	}

	.fx {
		width: 92px;
		justify-content: space-around;
	}

	.fn {
		font: italic bold 21px/20px "Liberation Serif", serif;
		color: #333;
	}

	.expr {
		flex: 1;
		padding: 0 4px 0 12px;
		color: #333;
	}

	.expr input {
		flex: 1;
	}

	.expr .chev {
		color: #999;
	}

	/* sheet */
	.sheet {
		display: flex;
		flex: 1;
		min-height: 0;
		overflow: hidden;
	}

	.grid-wrap {
		position: relative;
		flex: 1;
		overflow: hidden;
		background: #fff;
	}

	table {
		width: 100%;
		table-layout: fixed;
		border-collapse: separate;
		border-spacing: 0;
	}

	.c-num { width: 34px; }
	.c-ab { width: 290px; }
	.c-cd { width: 228px; }
	.c-ef { width: 189px; }

	th,
	td {
		padding: 0;
		border-right: 1px solid #d9d9d9;
		border-bottom: 1px solid #d9d9d9;
		box-sizing: border-box;
	}

	th {
		background: #efefef;
		color: #555;
		font-weight: 400;
		font-size: 17px;
		line-height: 20px;
	}

	thead th {
		height: 22px;
		border-bottom-color: #a9a9a9;
	}

	.corner svg {
		margin: 3px 3px 0 auto;
		fill: #d8d8d8;
		stroke: none;
	}

	tbody tr {
		height: 63px;
	}

	tbody th {
		vertical-align: bottom;
		border-right-color: #a9a9a9;
	}

	.boxed {
		border-color: #000;
	}

	.heading {
		padding-top: 3px;
		background: #8ea9db;
		color: #000;
		font: 600 24px/30px "Liberation Serif", "Noto Sans CJK SC", serif;
		text-align: center;
	}

	.canvas {
		position: absolute;
		inset: 22px 0 0 34px;
		overflow: hidden;
	}

	.control {
		position: absolute;
		left: 1036px;
		top: 0;
		width: 50px;
		height: 569px;
		display: flex;
		flex-direction: column;
		align-items: center;
		border: solid #444;
		border-width: 0 1px 1px;
		box-sizing: border-box;
		background: #f0f0f0;
		color: #555;
	}

	.control svg {
		margin-top: 21px;
		stroke-width: 2;
	}

	.control .thumb {
		width: 100%;
		height: 16px;
		margin-top: 17px;
		background: #cbcbcb;
	}

	.control .down {
		margin: auto 0 18px;
	}

	.handle {
		position: absolute;
		width: 14px;
		height: 14px;
		margin: -7px;
		border: 2px solid #555;
		border-radius: 50%;
		box-sizing: border-box;
		background: #fff;
	}

	.tl, .tc, .tr { top: 0; }
	.ml, .mr { top: 50%; }
	.bl, .bc, .br { top: 100%; }
	.tl, .ml, .bl { left: 0; }
	.tc, .bc { left: 50%; }
	.tr, .mr, .br { left: 100%; }

	.ants {
		position: absolute;
		left: 1224px;
		top: 0;
		stroke: #2b6548;
		stroke-width: 2;
		stroke-dasharray: 7 2;
	}

	.vbar {
		display: flex;
		flex-direction: column;
		align-items: center;
		width: 26px;
		padding: 5px 0 3px;
		box-sizing: border-box;
		background: #f3f3f3;
	}

	.vbar span {
		width: 12px;
		height: 276px;
		margin-top: 5px;
		border-radius: 6px;
		background: #707070;
	}

	.vbar svg,
	.hbar svg {
		fill: #666;
		stroke: none;
	}

	.vbar .end {
		margin-top: auto;
	}

	/* sheet tabs */
	.sheetbar {
		display: flex;
		align-items: center;
		height: 39px;
		padding-right: 30px;
		border-top: 1px solid #dcdcdc;
		box-sizing: border-box;
		font-size: 18px;
		color: #333;
		flex: none;
	}

	.nav {
		width: 41px;
		color: #999;
	}

	.nav:first-child {
		margin-left: 15px;
	}

	.sheet-tab {
		height: 28px;
		padding: 0 12px;
		margin-left: 42px;
		border-right: 1px solid #d0d0d0;
	}

	.sheet-tab.active {
		align-self: flex-start;
		height: 36px;
		margin: -1px 5px 0 4px;
		padding: 0 11px;
		border: 0;
		border-radius: 0 0 6px 6px;
		background: #fff;
	}

	.sheet-tab.active span {
		line-height: 26px;
		border-bottom: 2px solid #1f6f43;
	}

	.add {
		padding-left: 52px;
		border-left: 1px solid #d0d0d0;
		height: 24px;
		color: #888;
	}

	.hbar {
		display: flex;
		align-items: center;
		justify-content: flex-end;
		flex: 1;
		gap: 91px;
	}

	.hbar span {
		width: 400px;
		height: 11px;
		border-radius: 6px;
		background: #707070;
	}

	/* status bar */
	.status {
		display: flex;
		align-items: center;
		height: 28px;
		padding: 0 10px 0 16px;
		border-top: 1px solid #fff;
		box-sizing: border-box;
		background: #f3f3f3;
		color: #333;
		flex: none;
	}

	.macro {
		margin: 0 20px 0 38px;
	}

	.access {
		gap: 4px;
		font-weight: 500;
	}

	.views {
		display: flex;
		gap: 32px;
		margin-left: auto;
		color: #b4b4b4;
	}

	.zoom {
		display: flex;
		align-items: center;
		margin-left: 23px;
		color: #b4b4b4;
		gap: 6px;
	}

	.track {
		width: 124px;
		height: 11px;
		background:
			linear-gradient(#666, #666) center / 100% 1px no-repeat,
			linear-gradient(#666, #666) center / 1px 100% no-repeat;
	}

	.value {
		margin-left: 11px;
		font-size: 16px;
	}

	.taskbar {
		display: flex;
		height: 9px;
		overflow: hidden;
		background: #ebebeb;
		flex: none;
	}

	.preview {
		width: 360px;
		margin: 0 188px 0 60px;
		border: 1px solid #bdbdbd;
		border-bottom: 0;
		box-sizing: border-box;
		background: #fff;
	}

	.preview svg {
		margin: 4px 18px 0 auto;
		stroke: none;
	}

	.pin {
		width: 61px;
		background: #f6f6f6;
	}

	.clock {
		margin: 3px 90px 0 auto;
		color: #111;
	}

	/* format control dialog */
	.dialog {
		position: absolute;
		left: 1153px;
		top: 372px;
		width: 593px;
		height: 629px;
		display: flex;
		flex-direction: column;
		border: 1px solid #6a6a6a;
		box-sizing: border-box;
		background: #f0f0f0;
		color: #000;
		box-shadow: 2px 4px 18px rgba(0, 0, 0, 0.35);
	}

	.dialog header {
		display: flex;
		align-items: center;
		height: 37px;
		padding: 0 2px 0 9px;
		background: #fff;
	}

	.dialog header span {
		flex: 1;
	}

	.dialog header button {
		width: 57px;
	}

	.dialog-tabs {
		display: flex;
		align-items: flex-end;
		height: 42px;
		padding-left: 8px;
	}

	.dialog-tabs button {
		width: 72px;
		height: 31px;
		border: solid #dadada;
		border-width: 1px 1px 0 0;
	}

	.dialog-tabs .long {
		width: 84px;
		border-right: 0;
	}

	.dialog-tabs .active {
		width: 77px;
		height: 34px;
		margin-left: -2px;
		margin-bottom: -1px;
		background: #fff;
		z-index: 1;
	}

	.panel {
		flex: 1;
		margin: 0 10px 0 8px;
		padding: 14px 11px;
		border: 1px solid #dadada;
		background: #fff;
	}

	.field {
		display: flex;
		align-items: flex-start;
		height: 35px;
	}

	.field label {
		width: 109px;
		padding-top: 1px;
		white-space: nowrap;
	}

	.short,
	.spin,
	.ref {
		height: 30px;
		border: 1px solid #acacac;
		box-sizing: border-box;
		background: #fff;
	}

	.short {
		width: 88px;
		padding: 0 0 3px 4px;
	}

	.spin {
		display: flex;
		width: 109px;
	}

	.spin input {
		flex: 1;
		min-width: 0;
		padding: 0 0 3px 4px;
	}

	.arrows {
		display: flex;
		flex-direction: column;
		width: 20px;
		margin: 1px;
	}

	.arrows button {
		flex: 1;
		border: 1px solid #b4b4b4;
		background: #f0f0f0;
	}

	.arrows svg,
	.ref svg {
		fill: #000;
		stroke: none;
	}

	.ref {
		display: flex;
		align-items: center;
		width: 224px;
	}

	.ref-box {
		flex: 1;
		padding: 0 0 3px 3px;
	}

	.ref-box input {
		width: 36px;
		height: 22px;
		background: #c6c6c6;
	}

	.ref button {
		width: 26px;
		height: 28px;
		border: 3px solid #d6d6d6;
		outline: 1px solid #a0a0a0;
		background: #fff;
	}

	.check {
		display: flex;
		align-items: center;
		gap: 5px;
		margin-top: 10px;
	}

	.check input {
		display: grid;
		place-items: center;
		width: 16px;
		height: 16px;
		border: 1px solid #333;
		appearance: none;
	}

	.check input:checked::after {
		content: '';
		width: 9px;
		height: 4px;
		margin-top: -3px;
		border: solid #333;
		border-width: 0 0 1px 1px;
		transform: rotate(-45deg);
	}

	.actions {
		display: flex;
		justify-content: flex-end;
		gap: 13px;
		padding: 14px 9px 11px;
	}

	.actions button {
		width: 99px;
		height: 34px;
		border: 1px solid #adadad;
		background: #e1e1e1;
	}

	.actions .ok {
		border: 2px solid #0078d7;
	}

	.notes {
		position: absolute;
		inset: 0;
		overflow: hidden;
		pointer-events: none;
		color: #fb3737;
	}

	.notes > * {
		position: absolute;
		margin: 0;
	}

	.box {
		border: 3px solid #d94444;
		box-sizing: border-box;
	}

	.tab-box { left: 1457px; top: 412px; width: 88px; height: 55px; }
	.ok-box { left: 1504px; top: 948px; width: 129px; height: 50px; }

	.arrow {
		fill: #fb3737;
		stroke: none;
	}

	.a1 { left: 1328px; top: 538px; }
	.a2 { left: 1322px; top: 578px; }
	.a3 { left: 1329px; top: 662px; }

	.notes p {
		font-size: 30px;
		line-height: 40px;
		white-space: nowrap;
	}

	.n2 { left: 1401px; top: 526px; }
	.n3 { left: 1401px; top: 566px; }
	.n4 { left: 1373px; top: 688px; }

	.notes .mark {
		left: 1267px;
		top: 916px;
		color: #fff;
		font-size: 57px;
		line-height: 66px;
		text-shadow: 3px 3px 1px #999;
	}
</style>
